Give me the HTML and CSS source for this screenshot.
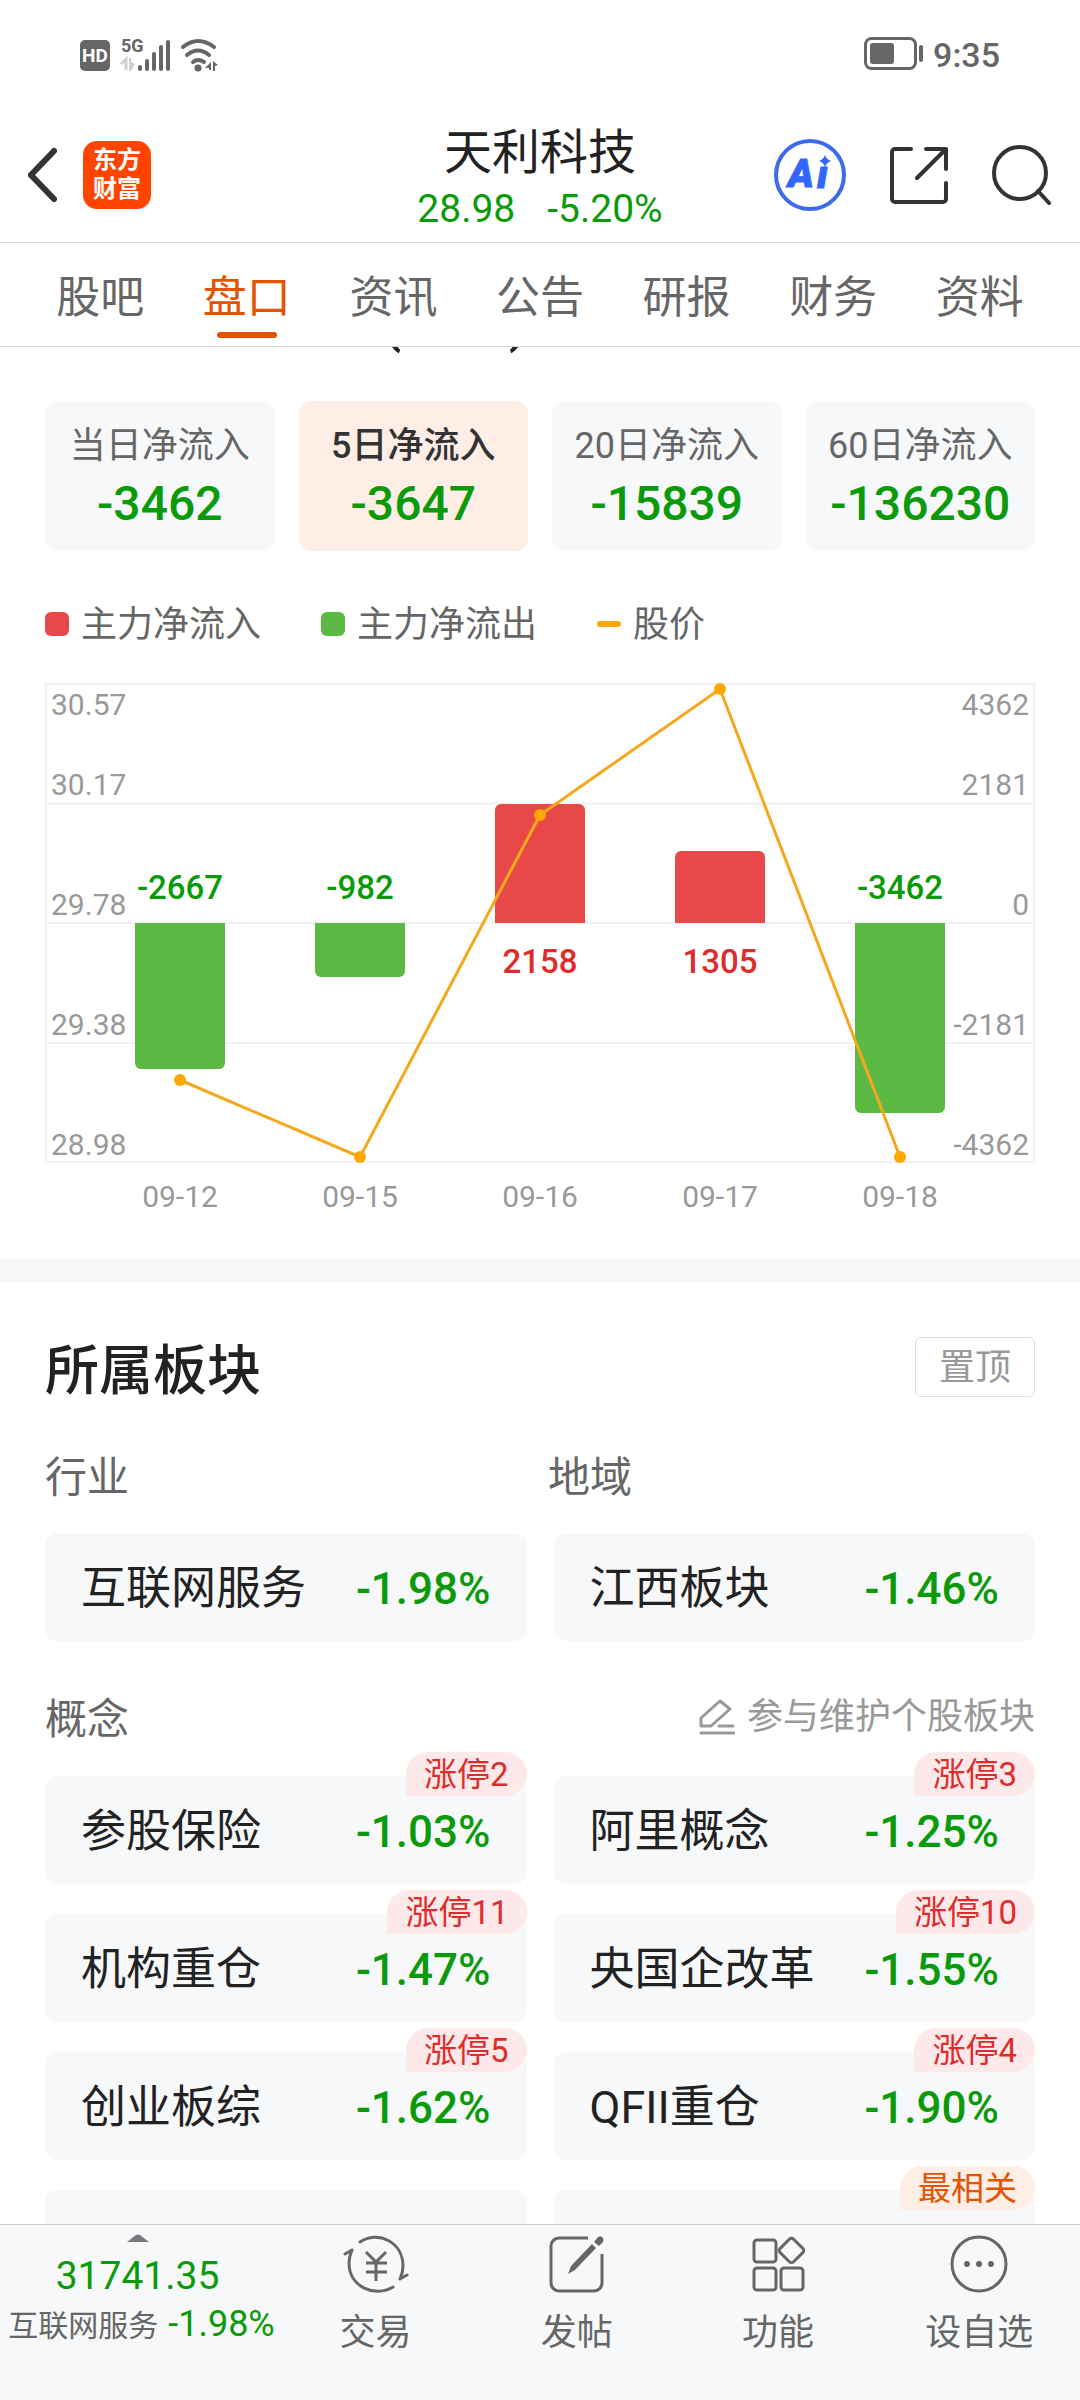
FILE: index.html
```html
<!DOCTYPE html>
<html lang="zh-CN">
<head>
<meta charset="utf-8">
<meta name="viewport" content="width=device-width, initial-scale=1">
<title>天利科技</title>
<link rel="stylesheet" href="styles.css">
</head>
<body>
<div class="app">
  <div class="status">
    <svg class="status-left" width="140" height="36" viewBox="0 0 140 36" aria-hidden="true">
      <rect x="0" y="4" width="30" height="31" rx="5" fill="#666"/>
      <text x="15" y="26" class="hd" text-anchor="middle">HD</text>
      <text x="41" y="16" class="net">5G</text>
      <path d="M41 28l5-5v11" fill="none" stroke="#d0d0d0" stroke-width="3"/>
      <path d="M49 22h2v4l4 2-4 7h-2z" fill="#d0d0d0"/>
      <g stroke="#666" stroke-width="4" stroke-linecap="round">
        <path d="M60 31v2M67 25v8M74 18v15M81 11v22M88 6v27"/>
      </g>
      <g fill="none" stroke="#666" stroke-width="4" stroke-linecap="round">
        <path d="M103 11q15-12 31 0M107 19q11-9 22 0M113 26q5-4 11 0"/>
      </g>
      <circle cx="118" cy="32" r="3.500" fill="#666"/>
      <path d="M125 32l6-6v8h-2v-2zM133 25l5 4-3 1v5h-2z" fill="#666"/>
    </svg>
    <div class="status-right">
      <svg width="60" height="34" viewBox="0 0 60 34" aria-hidden="true">
        <rect x="1.500" y="1.500" width="50" height="30" rx="6" fill="none" stroke="#666" stroke-width="3"/>
        <rect x="6" y="6" width="24" height="21" rx="3" fill="#666"/>
        <rect x="55" y="8" width="4" height="17" rx="2" fill="#666"/>
      </svg>
      <span>9:35</span>
    </div>
  </div>

  <header class="header">
    <div class="header-side">
      <button class="icon-btn" aria-label="返回">
        <svg width="32" height="56" viewBox="4 0 32 56"><path d="M30 4L7 28l23 24" fill="none" stroke="#333" stroke-width="6" stroke-linecap="round"/></svg>
      </button>
      <a class="logo" href="#"><span>东方</span><span>财富</span></a>
    </div>
    <div class="header-title">
      <h1>天利科技</h1>
      <div class="quote"><span>28.98</span><span>-5.20%</span></div>
    </div>
    <div class="header-side header-actions">
      <button class="icon-btn" aria-label="Ai">
        <svg width="72" height="74" viewBox="0 0 72 74">
          <circle cx="36" cy="37" r="34" fill="none" stroke="#3d6aef" stroke-width="4"/>
          <text x="14" y="49" class="ai">A</text>
          <text x="43" y="50" class="ai">ı</text>
          <path d="M51 17q1.500 4.500 6 6-4.500 1.500-6 6-1.500-4.500-6-6 4.500-1.500 6-6z" fill="#3366ff"/>
        </svg>
      </button>
      <button class="icon-btn" aria-label="分享">
        <svg width="58" height="60" viewBox="0 0 58 60"><path d="M21 4H5a3 3 0 0 0-3 3v47a3 3 0 0 0 3 3h48a3 3 0 0 0 3-3V38M36 4h20v20M56 4L27 33" fill="none" stroke="#333" stroke-width="4" stroke-linecap="round" stroke-linejoin="round"/></svg>
      </button>
      <button class="icon-btn" aria-label="搜索">
        <svg width="60" height="60" viewBox="0 0 60 60"><circle cx="28" cy="28" r="26" fill="none" stroke="#333" stroke-width="4"/><path d="M46 46l11 12" fill="none" stroke="#333" stroke-width="4" stroke-linecap="round"/></svg>
      </button>
    </div>
  </header>

  <nav class="tabs">
    <a href="#">股吧</a>
    <a href="#" class="active" aria-current="page">盘口</a>
    <a href="#">资讯</a>
    <a href="#">公告</a>
    <a href="#">研报</a>
    <a href="#">财务</a>
    <a href="#">资料</a>
  </nav>

  <main class="content">
    <section class="flow">
      <h2 class="flow-title">主力资金流入 (万元)</h2>
      <div class="periods">
        <button class="period"><span>当日净流入</span><strong>-3462</strong></button>
        <button class="period selected"><span>5日净流入</span><strong>-3647</strong></button>
        <button class="period"><span>20日净流入</span><strong>-15839</strong></button>
        <button class="period"><span>60日净流入</span><strong>-136230</strong></button>
      </div>
      <ul class="legend">
        <li><i class="key key-in"></i>主力净流入</li>
        <li><i class="key key-out"></i>主力净流出</li>
        <li><i class="key key-price"></i>股价</li>
      </ul>
      <svg class="chart" viewBox="0 0 990 532" role="img" aria-label="主力净流入与股价">
        <g class="grid">
          <rect x="1" y="1" width="988" height="478"/>
          <path d="M0 120.500h990M0 240h990M0 360h990"/>
        </g>
        <g class="axis">
          <text x="6" y="32">30.57</text>
          <text x="6" y="112">30.17</text>
          <text x="6" y="232">29.78</text>
          <text x="6" y="352">29.38</text>
          <text x="6" y="472">28.98</text>
        </g>
        <g class="axis end">
          <text x="984" y="32">4362</text>
          <text x="984" y="112">2181</text>
          <text x="984" y="232">0</text>
          <text x="984" y="352">-2181</text>
          <text x="984" y="472">-4362</text>
        </g>
        <g fill="#5cba44">
          <path d="M90 240h90v140a6 6 0 0 1-6 6H96a6 6 0 0 1-6-6z"/>
          <path d="M270 240h90v48a6 6 0 0 1-6 6h-78a6 6 0 0 1-6-6z"/>
          <path d="M810 240h90v184a6 6 0 0 1-6 6h-78a6 6 0 0 1-6-6z"/>
        </g>
        <g fill="#e84848">
          <path d="M450 240V127a6 6 0 0 1 6-6h78a6 6 0 0 1 6 6v113z"/>
          <path d="M630 240v-66a6 6 0 0 1 6-6h78a6 6 0 0 1 6 6v66z"/>
        </g>
        <g class="value down">
          <text x="135" y="216">-2667</text>
          <text x="315" y="216">-982</text>
          <text x="855" y="216">-3462</text>
        </g>
        <g class="value up">
          <text x="495" y="290">2158</text>
          <text x="675" y="290">1305</text>
        </g>
        <polyline points="135,397 315,474 495,132 675,6 855,474" fill="none" stroke="#f5a81c" stroke-width="3"/>
        <g fill="#ffa800">
          <circle cx="135" cy="397" r="6"/><circle cx="315" cy="474" r="6"/><circle cx="495" cy="132" r="6"/><circle cx="675" cy="6" r="6"/><circle cx="855" cy="474" r="6"/>
        </g>
        <g class="axis middle">
          <text x="135" y="524">09-12</text>
          <text x="315" y="524">09-15</text>
          <text x="495" y="524">09-16</text>
          <text x="675" y="524">09-17</text>
          <text x="855" y="524">09-18</text>
        </g>
      </svg>
    </section>

    <section class="sectors">
      <div class="sectors-head">
        <h2>所属板块</h2>
        <button class="pin">置顶</button>
      </div>
      <div class="labels"><h3>行业</h3><h3>地域</h3></div>
      <div class="cards">
        <a class="card" href="#"><span>互联网服务</span><strong>-1.98%</strong></a>
        <a class="card" href="#"><span>江西板块</span><strong>-1.46%</strong></a>
      </div>
      <div class="concept-head">
        <h3>概念</h3>
        <a class="edit" href="#">
          <svg width="36" height="38" viewBox="0 0 36 38" aria-hidden="true"><path d="M2 28V20L21 3l10 8L12 28zM20 28h14M2 35h33" fill="none" stroke="#999" stroke-width="3" stroke-linejoin="round" stroke-linecap="round"/></svg>
          参与维护个股板块
        </a>
      </div>
      <div class="cards">
        <a class="card" href="#"><span>参股保险</span><strong>-1.03%</strong><em class="badge">涨停2</em></a>
        <a class="card" href="#"><span>阿里概念</span><strong>-1.25%</strong><em class="badge">涨停3</em></a>
        <a class="card" href="#"><span>机构重仓</span><strong>-1.47%</strong><em class="badge">涨停11</em></a>
        <a class="card" href="#"><span>央国企改革</span><strong>-1.55%</strong><em class="badge">涨停10</em></a>
        <a class="card" href="#"><span>创业板综</span><strong>-1.62%</strong><em class="badge">涨停5</em></a>
        <a class="card" href="#"><span>QFII重仓</span><strong>-1.90%</strong><em class="badge">涨停4</em></a>
        <a class="card" href="#"></a>
        <a class="card" href="#"><em class="badge related">最相关</em></a>
      </div>
    </section>
  </main>

  <nav class="bottom">
    <a class="index" href="#">
      <svg width="22" height="8" viewBox="0 0 22 8" aria-hidden="true"><path d="M0 8L9 1q2-1 4 0l9 7z" fill="#77777c"/></svg>
      <span class="index-value">31741.35</span>
      <span class="index-row"><span>互联网服务</span><b>-1.98%</b></span>
    </a>
    <button class="action">
      <svg width="68" height="60" viewBox="0 0 68 60" aria-hidden="true"><g fill="none" stroke="#666" stroke-width="3" stroke-linecap="round" stroke-linejoin="round"><path d="M18 8C36-4 61 8 61 32q0 6-3 13l7-4M51 53C33 64 7 53 7 29q0-6 3-13l-7 4"/></g><path d="M24 18l10 10 10-10M34 28v19M24 29h21M24 38h21" fill="none" stroke="#666" stroke-width="3"/></svg>
      交易
    </button>
    <button class="action">
      <svg width="56" height="60" viewBox="0 0 56 60" aria-hidden="true"><path d="M39 4H10a8 8 0 0 0-8 8v37a8 8 0 0 0 8 8h35a8 8 0 0 0 8-8V20" fill="none" stroke="#666" stroke-width="3"/><path d="M43 10l4 4-21 22-7 4 3-8zM45 8l4-5q3-2 5 1 1 2 0 4l-4 4z" fill="#666"/></svg>
      发帖
    </button>
    <button class="action">
      <svg width="54" height="60" viewBox="0 0 54 60" aria-hidden="true"><g fill="none" stroke="#666" stroke-width="3"><rect x="3" y="6" width="22" height="22" rx="3"/><rect x="3" y="34" width="22" height="22" rx="3"/><rect x="30" y="34" width="22" height="22" rx="3"/><rect x="31" y="7" width="19" height="19" rx="3" transform="rotate(45 40.500 16.500)"/></g></svg>
      功能
    </button>
    <button class="action">
      <svg width="58" height="60" viewBox="0 0 58 60" aria-hidden="true"><circle cx="29" cy="30" r="27" fill="none" stroke="#666" stroke-width="3"/><g fill="#666"><circle cx="17" cy="30" r="3"/><circle cx="29" cy="30" r="3"/><circle cx="41" cy="30" r="3"/></g></svg>
      设自选
    </button>
  </nav>
</div>
</body>
</html>
```
FILE: styles.css
```css
* { box-sizing: border-box; }

body {
  margin: 0;
  background: #fff;
  color: #222;
  font-family: Roboto, "Noto Sans CJK SC", sans-serif;
  font-weight: 400;
}

h1, h2, h3, ul { margin: 0; padding: 0; font-weight: 400; }
a { color: inherit; text-decoration: none; }
button { font: inherit; color: inherit; border: 0; background: none; padding: 0; margin: 0; }
strong, b, em, i { font-style: normal; font-weight: 500; }
svg { display: block; flex: none; }

.app { height: 100vh; display: flex; flex-direction: column; overflow: hidden; }

/* status bar */
.status {
  height: 108px;
  flex: none;
  display: flex;
  align-items: center;
  justify-content: space-between;
  padding: 0 80px;
  color: #666;
}
.status-left { overflow: visible; }
.status-right { display: flex; align-items: center; gap: 9px; font-size: 34px; line-height: 40px; font-weight: 500; }
.status-right span { padding-top: 2px; }
.hd { font: 700 19px Roboto, sans-serif; fill: #fff; }
.net { font: 700 18px "Liberation Sans Narrow", Roboto, sans-serif; fill: #666; }

/* header */
.header {
  flex: none;
  height: 135px;
  display: grid;
  grid-template-columns: 1fr auto 1fr;
  align-items: center;
  padding: 0 28px;
  border-bottom: 1px solid #d4d4d4;
}
.header-side { display: flex; align-items: center; gap: 23px; }
.header-actions { justify-content: flex-end; gap: 44px; }
.logo {
  width: 68px;
  height: 68px;
  border-radius: 14px;
  background: #ff4400;
  color: #fff;
  font-weight: 700;
  font-size: 24px;
  line-height: 29px;
  display: flex;
  flex-direction: column;
  align-items: center;
  justify-content: center;
}
.header-title { text-align: center; padding-top: 8px; }
h1 { font-size: 48px; line-height: 60px; }
.quote { display: flex; gap: 32px; justify-content: center; color: #0a9a0a; font-size: 39px; line-height: 52px; }
.ai { font: italic 900 39px Roboto, sans-serif; fill: #3366ff; stroke: #3366ff; stroke-width: 1px; }

/* tabs */
.tabs {
  flex: none;
  height: 104px;
  display: grid;
  grid-template-columns: repeat(7, 1fr);
  padding: 0 27px;
  border-bottom: 1px solid #d4d4d4;
  color: #666;
  font-size: 44px;
  line-height: 64px;
  text-align: center;
}
.tabs a { display: flex; flex-direction: column; align-items: center; padding-top: 23px; }
.tabs .active { color: #e55300; }
.tabs .active::after { content: ""; width: 60px; height: 6px; border-radius: 3px; background: #e55300; margin-top: 2px; }

/* fund flow */
.content { flex: 1; min-height: 0; overflow: hidden; }
.flow { padding: 0 45px 44px; border-bottom: 24px solid #f7f8fa; }
.flow-title { font-size: 54px; line-height: 60px; margin-top: -54px; font-weight: 500; padding-bottom: 48px; }
.periods { display: grid; grid-template-columns: repeat(4, 1fr); gap: 24px; }
.period {
  height: 150px;
  border-radius: 12px;
  background: #f7f8fa;
  color: #666;
  font-size: 36px;
  line-height: 50px;
  display: flex;
  flex-direction: column;
  align-items: center;
  padding-top: 20px;
  white-space: nowrap;
}
.period strong { color: #0a9a0a; font-size: 48px; line-height: 66px; }
.period.selected { background: #ffeee5; color: #333; font-weight: 500; }
.legend { list-style: none; display: flex; gap: 60px; margin-top: 44px; color: #666; font-size: 36px; line-height: 54px; }
.legend li { display: flex; align-items: center; gap: 12px; padding-top: 3px; }
.key { width: 24px; height: 24px; border-radius: 6px; margin-bottom: 3px; }
.key-in { background: #e84848; }
.key-out { background: #5cba44; }
.key-price { height: 6px; border-radius: 3px; background: #ffa800; }

.chart { width: 100%; margin-top: 31px; overflow: visible; }
.grid { fill: none; stroke: #f1f1f1; stroke-width: 2; }
.axis { font-size: 30px; fill: #999; }
.end { text-anchor: end; }
.middle { text-anchor: middle; }
.value { font-size: 33px; font-weight: 500; text-anchor: middle; }
.down { fill: #0a9a0a; }
.up { fill: #e02b2b; }

/* sectors */
.sectors { padding: 54px 45px 0; }
.sectors-head { display: flex; align-items: flex-start; justify-content: space-between; }
.sectors-head h2 { font-size: 54px; line-height: 66px; font-weight: 500; padding-top: 2px; }
.pin { width: 120px; height: 60px; border: 1px solid #ddd; border-radius: 6px; color: #999; font-size: 36px; line-height: 60px; }
h3 { font-size: 42px; line-height: 60px; color: #666; }
.labels { display: grid; grid-template-columns: 503px 1fr; margin: 43px 0 25px; }
.cards { display: grid; grid-template-columns: 1fr 1fr; gap: 30px 27px; }
.card {
  position: relative;
  height: 108px;
  border-radius: 12px;
  background: #f7f8fa;
  padding: 3px 36px 0;
  display: flex;
  align-items: center;
  justify-content: space-between;
  font-size: 45px;
  line-height: 66px;
}
.card strong { color: #0a9a0a; font-size: 44px; }
.badge {
  position: absolute;
  right: 0;
  top: -24px;
  height: 44px;
  padding: 0 18px;
  border-radius: 22px 22px 22px 0;
  background: #fde9e9;
  color: #e02b2b;
  font-size: 33px;
  line-height: 46px;
  font-weight: 400;
}
.related { background: #ffeee5; color: #e55300; }
.concept-head { display: flex; align-items: flex-end; justify-content: space-between; margin: 49px 0 26px; }
.edit { display: flex; align-items: center; gap: 12px; color: #999; font-size: 36px; line-height: 54px; padding-bottom: 6px; }

/* bottom bar */
.bottom {
  flex: none;
  height: 176px;
  display: grid;
  grid-template-columns: 275px repeat(4, 1fr);
  border-top: 1px solid #cdd0d4;
  background: #f7f8fa;
  color: #666;
}
.index { display: flex; flex-direction: column; align-items: center; padding-top: 9px; }
.index-value { font-size: 39px; line-height: 48px; margin-top: 10px; color: #0a9a0a; }
.index-row { display: flex; align-items: baseline; gap: 10px; font-size: 30px; line-height: 48px; white-space: nowrap; padding-left: 8px; }
.index-row b { font-size: 36px; color: #0a9a0a; font-weight: 400; }
.action { display: flex; flex-direction: column; align-items: center; font-size: 36px; line-height: 52px; gap: 13px; padding-top: 9px; }
```
